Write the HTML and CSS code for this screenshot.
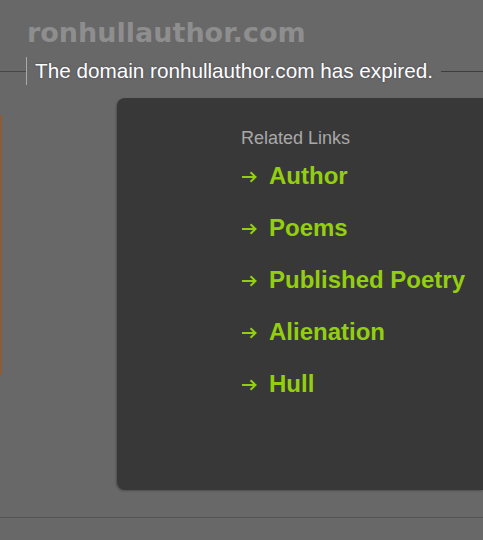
FILE: index.html
```html
<!DOCTYPE html>
<html>
<head>
<meta charset="utf-8">
<link rel="stylesheet" href="styles.css">
</head>
<body>
<div class="page">
  <h1 class="site">ronhullauthor.com</h1>
  <div class="notice">
    <span class="rule rule-left"></span>
    <p class="msg">The domain ronhullauthor.com has expired.</p>
    <span class="rule rule-right"></span>
  </div>
  <div class="panel">
    <div class="links">
      <div class="links-title">Related Links</div>
      <ul class="link-list">
        <li><svg class="arrow" width="16" height="12" viewBox="0 0 16 12"><path d="M1 6H14.5M9.5 1.2L14.5 6L9.5 10.8" fill="none" stroke="#93cf0e" stroke-width="2"/></svg><a href="#">Author</a></li>
        <li><svg class="arrow" width="16" height="12" viewBox="0 0 16 12"><path d="M1 6H14.5M9.5 1.2L14.5 6L9.5 10.8" fill="none" stroke="#93cf0e" stroke-width="2"/></svg><a href="#">Poems</a></li>
        <li><svg class="arrow" width="16" height="12" viewBox="0 0 16 12"><path d="M1 6H14.5M9.5 1.2L14.5 6L9.5 10.8" fill="none" stroke="#93cf0e" stroke-width="2"/></svg><a href="#">Published Poetry</a></li>
        <li><svg class="arrow" width="16" height="12" viewBox="0 0 16 12"><path d="M1 6H14.5M9.5 1.2L14.5 6L9.5 10.8" fill="none" stroke="#93cf0e" stroke-width="2"/></svg><a href="#">Alienation</a></li>
        <li><svg class="arrow" width="16" height="12" viewBox="0 0 16 12"><path d="M1 6H14.5M9.5 1.2L14.5 6L9.5 10.8" fill="none" stroke="#93cf0e" stroke-width="2"/></svg><a href="#">Hull</a></li>
      </ul>
    </div>
  </div>
  <div class="footer-rule"></div>
</div>
</body>
</html>
```
FILE: styles.css
```css
html, body {
  margin: 0;
  padding: 0;
}
body {
  width: 483px;
  height: 540px;
  overflow: hidden;
  background: linear-gradient(#8a5c3a, #8a5c3a) 0 115px / 2px 260px no-repeat, #686868;
  font-family: "Liberation Sans", Arial, sans-serif;
}
.page {
  padding-top: 16px;
}
.site {
  margin: 0 0 0 27px;
  font-family: "DejaVu Sans", Verdana, sans-serif;
  font-weight: bold;
  font-size: 27px;
  line-height: 34px;
  color: #8e8e8e;
}
.notice {
  display: flex;
  align-items: center;
  margin-top: 7px;
  height: 28px;
}
.rule {
  height: 1px;
  background: #474747;
}
.rule-left {
  width: 26px;
}
.rule-right {
  flex: 1;
  margin-left: 8px;
  background: #3e3e3e;
}
.msg {
  margin: 0;
  height: 28px;
  line-height: 28px;
  border-left: 1px solid #a9a9a9;
  padding-left: 8px;
  font-size: 20.7px;
  color: #ffffff;
  white-space: nowrap;
  text-shadow: 0 0 2px rgba(40, 40, 60, 0.6);
}
.panel {
  margin: 13px 0 0 117px;
  height: 392px;
  background: #383838;
  border-radius: 8px 0 0 8px;
  box-shadow: -1px 1px 2px rgba(0,0,0,0.25);
}
.links {
  padding: 30px 0 0 124px;
}
.links-title {
  font-size: 18px;
  line-height: 20px;
  color: #a8a8a8;
}
.link-list {
  list-style: none;
  margin: 2px 0 0 0;
  padding: 0;
}
.link-list li {
  display: flex;
  align-items: center;
  height: 52px;
}
.arrow {
  display: block;
  flex: none;
  margin-right: 12px;
  margin-top: 2px;
}
.link-list a {
  font-size: 24px;
  line-height: 28px;
  font-weight: bold;
  color: #93cf0e;
  text-decoration: none;
  white-space: nowrap;
}
.footer-rule {
  margin-top: 27px;
  height: 1px;
  background: #555555;
}
```
